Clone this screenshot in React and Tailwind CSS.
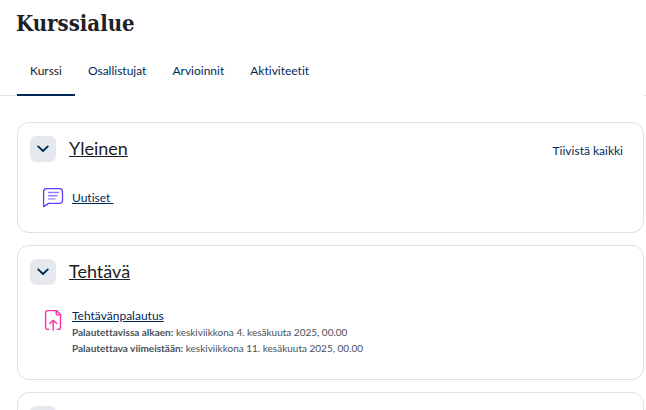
import React, { useState } from "react";

const tabs = ["Kurssi", "Osallistujat", "Arvioinnit", "Aktiviteetit"];

const ForumIcon = () => (
  <svg
    className="w-6 h-6 shrink-0"
    viewBox="0 0 24 24"
    fill="none"
    stroke="#5b40ff"
    strokeLinecap="round"
    strokeLinejoin="round"
    aria-hidden="true"
  >
    <path
      strokeWidth="1.3"
      d="M5.5 2.6h13a3 3 0 0 1 3 3v8.8a3 3 0 0 1-3 3H7.6L2.6 20.6V5.6a3 3 0 0 1 2.9-3Z"
    />
    <path strokeWidth="1.4" stroke="#8f7dff" d="M7.5 6.5h10M7.5 9.7h8.5M7.5 12.9h6.5" />
  </svg>
);

const AssignIcon = () => (
  <svg
    className="w-6 h-6 shrink-0"
    viewBox="0 0 24 24"
    fill="none"
    stroke="#ff2ba6"
    strokeWidth="1.4"
    strokeLinecap="round"
    strokeLinejoin="round"
    aria-hidden="true"
  >
    <path d="M7.8 21.4H6.8a2.2 2.2 0 0 1-2.2-2.2V4.8a2.2 2.2 0 0 1 2.2-2.2h8.7l4 4v12.6a2.2 2.2 0 0 1-2.2 2.2h-1" />
    <path d="M15.2 2.8v2.8a1.3 1.3 0 0 0 1.3 1.3h2.8" />
    <path d="M12.2 22V12.4M8.8 15.4l3.4-3.2 3.4 3.2" />
  </svg>
);

const Section = ({ title, open, onToggle, action, children }) => (
  <section className="border border-[#dee0e6] rounded-xl px-3 pt-[13px] pb-[22px]">
    <div className="flex items-center gap-[13px]">
      <button
        onClick={onToggle}
        aria-label="Tiivistä"
        aria-expanded={open}
        className="w-[26px] h-[26px] rounded-md bg-[#e5e9ee] flex items-center justify-center text-[#002957]"
      >
        <svg
          className="w-3 h-3"
          viewBox="0 0 12 12"
          fill="none"
          stroke="currentColor"
          strokeWidth="1.8"
          strokeLinecap="round"
          strokeLinejoin="round"
          aria-hidden="true"
        >
          <path d={open ? "M1.2 3.4 6 8l4.8-4.6" : "M4 1.2 8.6 6 4 10.8"} />
        </svg>
      </button>
      {title && (
        <h2 className="text-lg leading-6 pb-0.5">
          <a href="#section" className="underline">
            {title}
          </a>
        </h2>
      )}
      {action}
    </div>
    {open && children}
  </section>
);

const App = () => {
  const [active, setActive] = useState("Kurssi");
  const [open, setOpen] = useState([true, true, true]);

  const toggle = (index) =>
    setOpen(open.map((value, i) => (i === index ? !value : value)));

  return (
    <div className="h-screen overflow-hidden bg-white text-[#1d2125] font-['Lato','Noto_Sans',sans-serif] [font-variant-ligatures:none]">
      <h1 className="pl-4 pt-[9px] text-[22px] leading-7 font-bold font-['DejaVu_Serif_Condensed','Liberation_Serif',serif]">
        Kurssialue
      </h1>

      {/* Course tabs */}
      <nav className="mt-[11px] flex items-end">
        <span className="w-[17px] border-b border-[#dee0e6]" />
        <div className="flex-1 flex">
          {tabs.map((tab) => (
            <button
              key={tab}
              onClick={() => setActive(tab)}
              className={
                active === tab
                  ? "h-12 px-[13px] text-xs border-b-2 border-[#002957]"
                  : "h-12 px-[13px] text-xs border-b-2 border-transparent text-[#002957]"
              }
            >
              {tab}
            </button>
          ))}
        </div>
        <span className="w-0.5 border-b border-[#dee0e6]" />
      </nav>

      {/* Sections */}
      <main className="mt-[26px] ml-[17px] mr-0.5 flex flex-col gap-3">
        <Section
          title="Yleinen"
          open={open[0]}
          onToggle={() => toggle(0)}
          action={
            <button
              onClick={() => setOpen([false, false, false])}
              className="ml-auto mr-2 mt-1 text-xs text-[#002957]"
            >
              Tiivistä kaikki
            </button>
          }
        >
          <div className="mt-6 ml-[11px] flex items-center gap-[7px]">
            <ForumIcon />
            <a
              href="#uutiset"
              className="text-xs text-[#002957] underline whitespace-pre"
            >
              {"Uutiset "}
            </a>
          </div>
        </Section>

        <Section title="Tehtävä" open={open[1]} onToggle={() => toggle(1)}>
          <div className="mt-[23px] mb-px ml-[11px] flex gap-[7px]">
            <AssignIcon />
            <div className="text-[10px] leading-4 text-[#495057]">
              <a
                href="#palautus"
                className="block w-fit text-xs text-[#002957] underline"
              >
                Tehtävänpalautus
              </a>
              <p>
                <strong>Palautettavissa alkaen:</strong> keskiviikkona 4.
                kesäkuuta 2025, 00.00
              </p>
              <p>
                <strong>Palautettava viimeistään:</strong> keskiviikkona 11.
                kesäkuuta 2025, 00.00
              </p>
            </div>
          </div>
        </Section>

        <Section open={open[2]} onToggle={() => toggle(2)} />
      </main>
    </div>
  );
};

export default App;
